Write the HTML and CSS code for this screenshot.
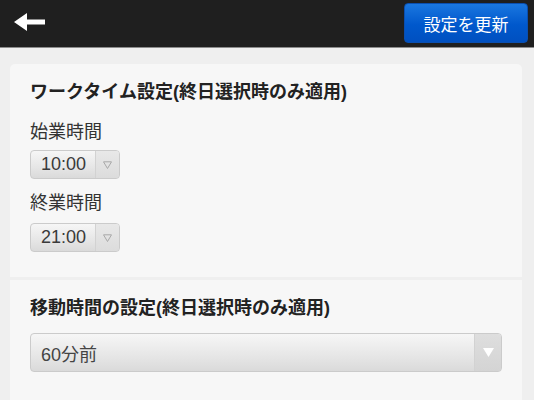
FILE: index.html
```html
<!DOCTYPE html>
<html lang="ja">
<head>
<meta charset="utf-8">
<link rel="stylesheet" href="styles.css">
</head>
<body>
<header class="topbar">
  <a class="back" aria-label="戻る">
    <svg width="31" height="18" viewBox="0 0 31 18"><path d="M0 9 L13 0 L13 6.5 L31 6.5 L31 11.5 L13 11.5 L13 18 Z" fill="#fff"/></svg>
  </a>
  <button class="update">設定を更新</button>
</header>
<main class="content">
  <section class="card">
    <h2 class="card-title">ワークタイム設定(終日選択時のみ適用)</h2>
    <div class="field">
      <div class="label">始業時間</div>
      <div class="select small"><span class="value">10:00</span><span class="arrow"><svg width="9" height="8" viewBox="0 0 9 8"><path d="M0.5 0.8 L8.5 0.8 L4.5 7.5 Z" fill="none" stroke="#a8a8a8" stroke-width="1"/></svg></span></div>
    </div>
    <div class="field">
      <div class="label">終業時間</div>
      <div class="select small"><span class="value">21:00</span><span class="arrow"><svg width="9" height="8" viewBox="0 0 9 8"><path d="M0.5 0.8 L8.5 0.8 L4.5 7.5 Z" fill="none" stroke="#a8a8a8" stroke-width="1"/></svg></span></div>
    </div>
  </section>
  <section class="card card2">
    <h2 class="card-title">移動時間の設定(終日選択時のみ適用)</h2>
    <div class="select large"><span class="value">60分前</span><span class="arrow"><svg width="11" height="9" viewBox="0 0 11 9"><path d="M0 0 L11 0 L5.5 9 Z" fill="#fff"/></svg></span></div>
  </section>
</main>
</body>
</html>
```
FILE: styles.css
```css
* { box-sizing: border-box; }
html, body { margin: 0; padding: 0; }
body {
  background: #efefef;
  font-family: "Liberation Sans", "Noto Sans CJK JP", sans-serif;
  color: #333;
  width: 534px;
  height: 400px;
  overflow: hidden;
}
.topbar {
  height: 48px;
  background: #1f1f1f;
  border-bottom: 1px solid #8c8c8c;
  display: flex;
  align-items: center;
  justify-content: space-between;
  padding: 0 6px 0 14px;
}
.back { display: flex; align-items: center; margin-top: -4px; }
.update {
  width: 124px;
  height: 40px;
  margin-top: -1px;
  border: 1px solid #0a4fb0;
  border-radius: 4px;
  background: linear-gradient(#1a77e0, #0058cc 55%, #0050c0);
  color: #fff;
  font-family: "Noto Sans CJK JP", sans-serif;
  font-size: 17px;
  padding: 0;
}
.content {
  padding: 16px 12px 0 10px;
  display: flex;
  flex-direction: column;
  gap: 3px;
}
.card {
  background: #f7f7f7;
  border-radius: 5px 5px 0 0;
  padding: 16px 20px 25px;
}
.card2 { border-radius: 0; padding-bottom: 28px; }
.card-title {
  margin: 0;
  font-size: 18px;
  line-height: 24px;
  font-weight: bold;
  color: #222;
}
.field { margin-top: 16px; }
.label {
  font-size: 18px;
  line-height: 24px;
  color: #333;
  margin-bottom: 6px;
}
.field + .field { margin-top: 12px; }
.field + .field .label { margin-bottom: 8px; }
.select {
  display: flex;
  align-items: stretch;
  border: 1px solid #cbcbcb;
  border-radius: 4px;
  background: linear-gradient(#f6f6f6, #e6e6e6 60%, #dadada);
  overflow: hidden;
}
.select .value {
  flex: 1;
  display: flex;
  align-items: center;
  font-size: 18px;
  color: #3a3a3a;
}
.select .arrow {
  display: flex;
  align-items: center;
  justify-content: center;
  border-left: 1px solid #d2d2d2;
  background: linear-gradient(#e8e8e8, #dcdcdc);
}
.small { width: 90px; height: 29px; }
.small .value { padding-left: 10px; }
.small .arrow { width: 24px; }
.large { width: 100%; height: 39px; margin-top: 13px; }
.large .value { padding-left: 10px; color: #444; }
.large .arrow { width: 27px; background: linear-gradient(#dedede, #d4d4d4); }
```
